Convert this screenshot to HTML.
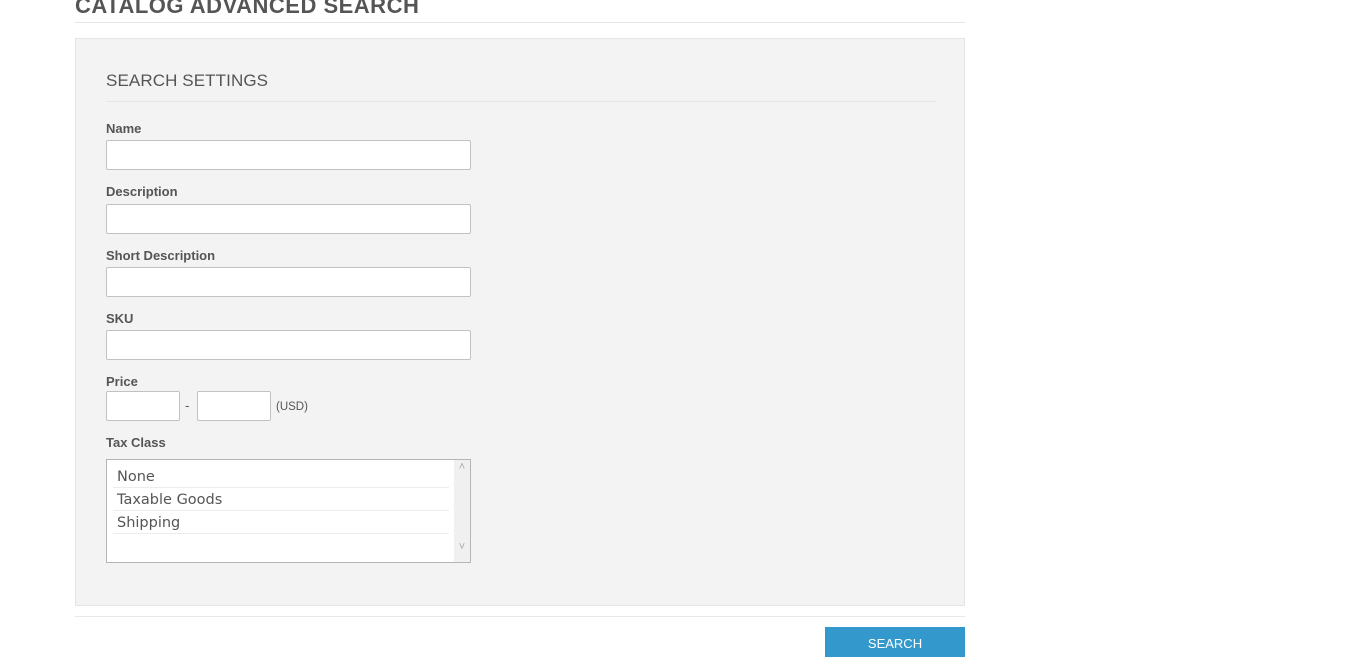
<!DOCTYPE html>
<html><head><style>
body{margin:0;background:#fff;font-family:"Liberation Sans",sans-serif;color:#555;width:1349px;height:654px;overflow:hidden;position:relative}
.t{position:absolute;left:75px;top:-7px;font-size:22px;font-weight:bold;color:#555;letter-spacing:0.5px;white-space:nowrap}
.hr1{position:absolute;left:75px;top:22px;width:890px;height:1px;background:#e8e8e8}
.box{position:absolute;left:75px;top:38px;width:888px;height:566px;background:#f3f3f3;border:1px solid #e6e6e6}
.h2{position:absolute;left:106px;top:71px;font-size:17px;color:#555;letter-spacing:0.1px}
.hr2{position:absolute;left:106px;top:101px;width:830px;height:1px;background:#e6e6e6}
.l{position:absolute;left:106px;font-size:13px;font-weight:bold;color:#555}
.i{position:absolute;left:106px;width:363px;height:28px;background:#fff;border:1px solid #c2c2c2;border-radius:2px}
.hr3{position:absolute;left:75px;top:616px;width:890px;height:1px;background:#e8e8e8}
.btn{position:absolute;left:825px;top:627px;width:140px;height:30px;background:#3399cc;color:#fff;font-size:13px;text-align:center;line-height:33px}
.sel{position:absolute;left:106px;top:459px;width:363px;height:102px;background:#fff;border:1px solid #b5b5b5}
.opt{position:absolute;left:6px;width:336px;height:22px;border-bottom:1px solid #ececec;line-height:22px;padding-left:4px;box-sizing:border-box;color:#555;font-family:"DejaVu Sans",sans-serif;font-size:14.5px}
.sb{position:absolute;right:0;top:0;width:16px;height:102px;background:#f0f0f0;color:#aaa;font-size:11px;text-align:center}
</style></head><body>
<div class="t">CATALOG ADVANCED SEARCH</div>
<div class="hr1"></div>
<div class="box"></div>
<div class="h2">SEARCH SETTINGS</div>
<div class="hr2"></div>
<div class="l" style="top:121px">Name</div>
<div class="i" style="top:140px"></div>
<div class="l" style="top:184px">Description</div>
<div class="i" style="top:204px"></div>
<div class="l" style="top:248px">Short Description</div>
<div class="i" style="top:267px"></div>
<div class="l" style="top:311px">SKU</div>
<div class="i" style="top:330px"></div>
<div class="l" style="top:374px">Price</div>
<div class="i" style="top:391px;width:72px"></div>
<div style="position:absolute;left:185px;top:398px;font-size:13px">-</div>
<div class="i" style="top:391px;left:197px;width:72px"></div>
<div style="position:absolute;left:276px;top:401px;font-size:11.5px">(USD)</div>
<div class="l" style="top:435px">Tax Class</div>
<div class="sel">
<div class="opt" style="top:6px">None</div>
<div class="opt" style="top:29px">Taxable Goods</div>
<div class="opt" style="top:52px">Shipping</div>
<div class="sb"><div style="margin-top:1px">&#708;</div><div style="margin-top:68px">&#709;</div></div>
</div>
<div class="hr3"></div>
<div class="btn">SEARCH</div>
</body></html>
